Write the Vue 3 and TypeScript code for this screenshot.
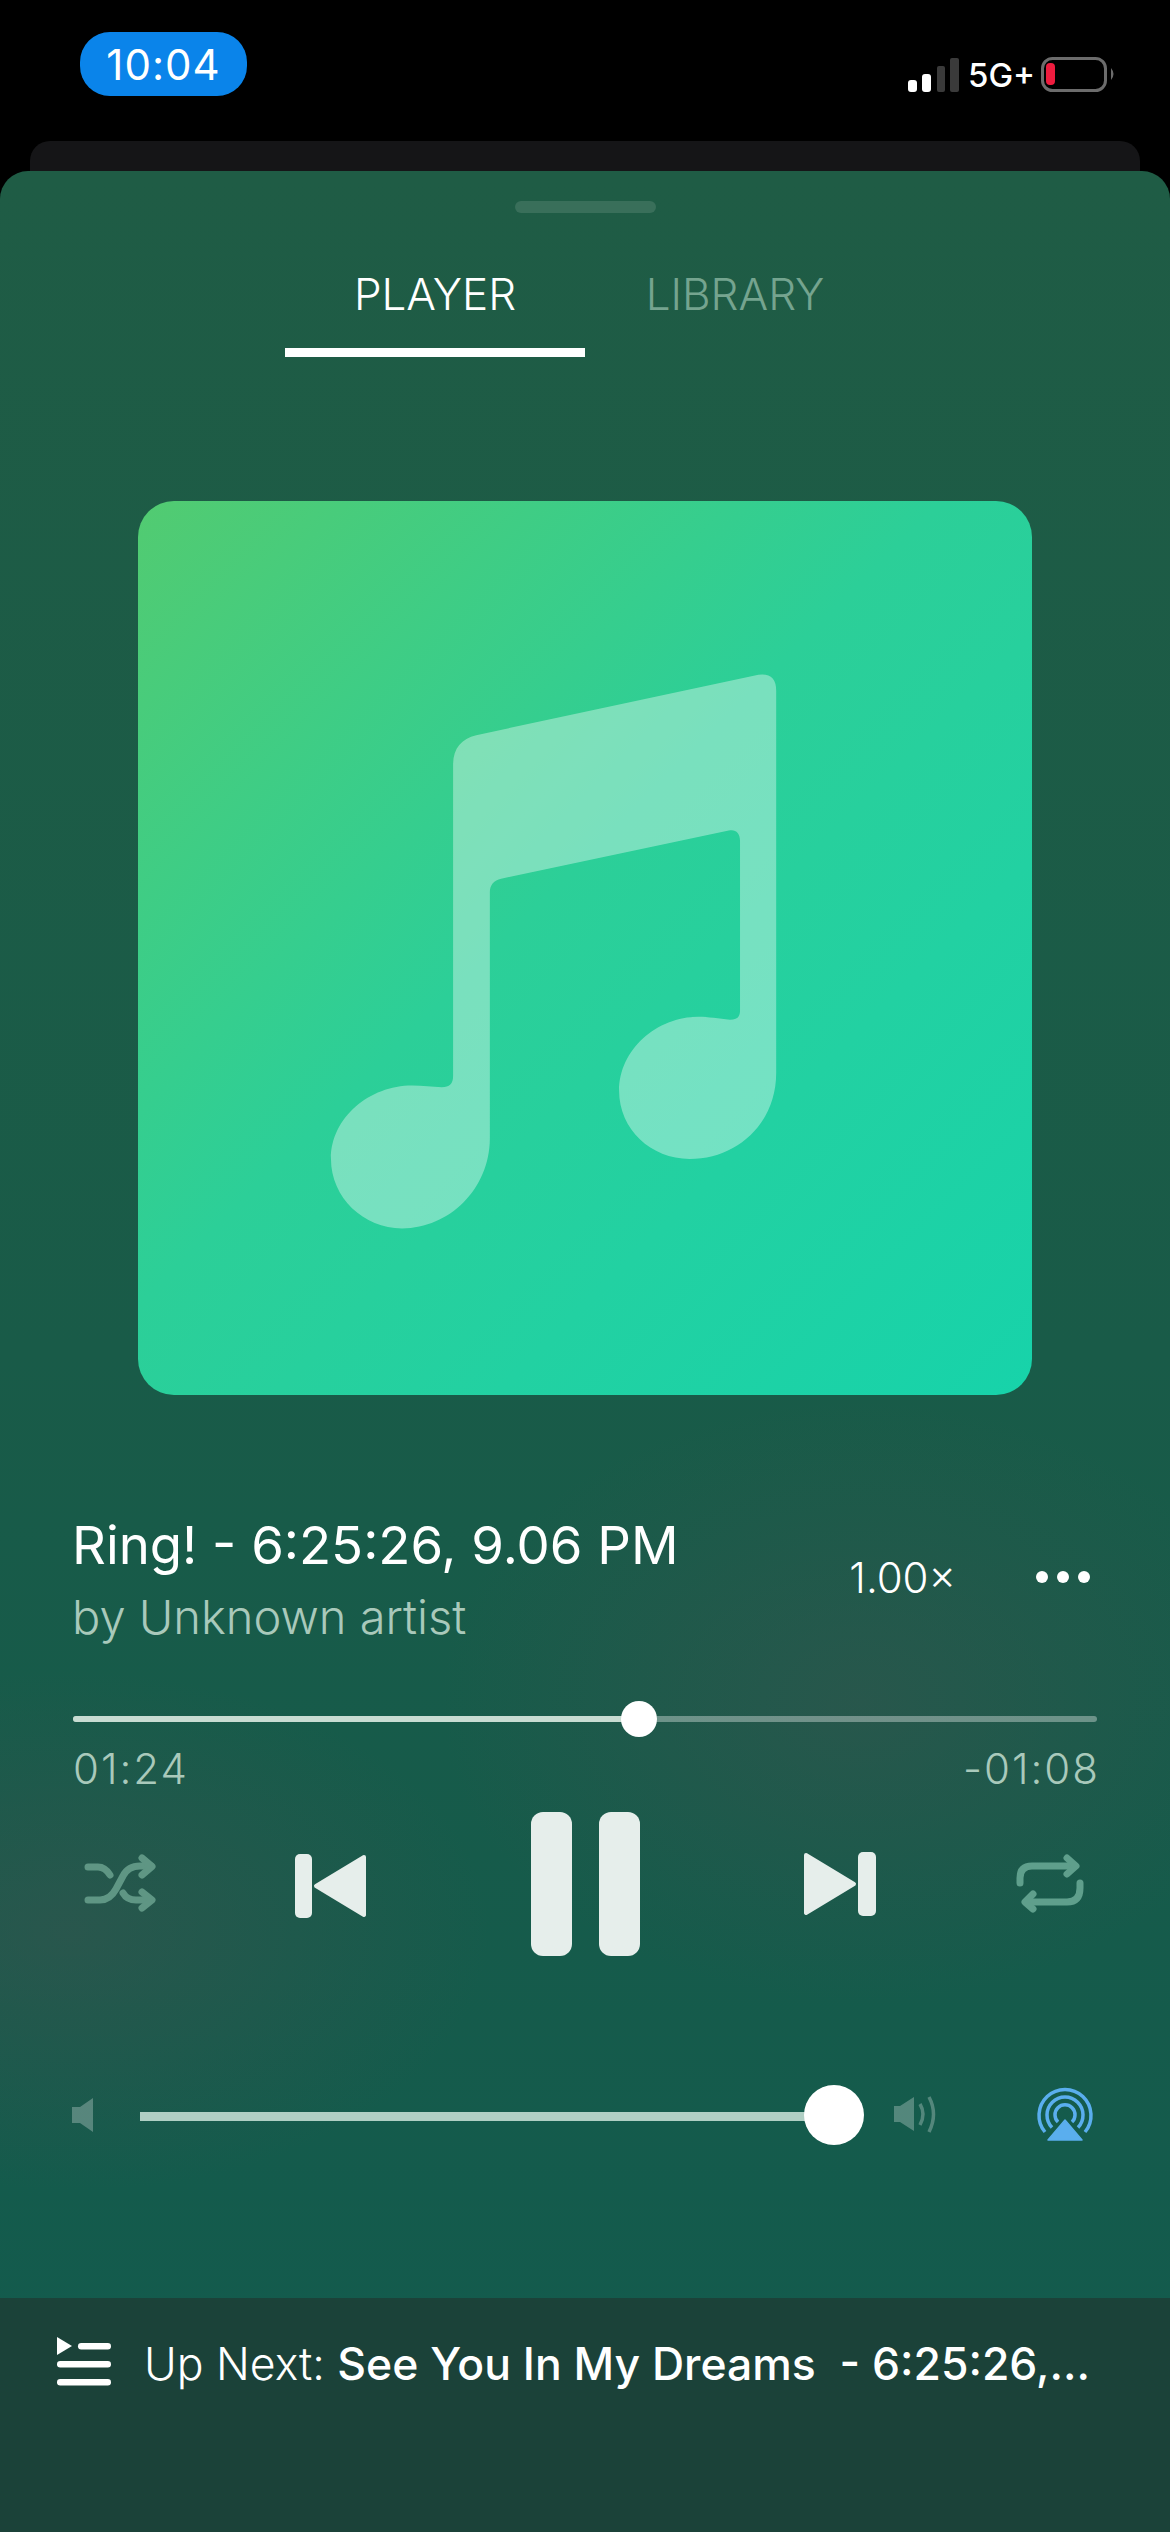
<script setup lang="ts">
const title = 'Ring! - 6:25:26, 9.06 PM'
const progress = 55.3
</script>

<template>
  <div class="screen">
    <header class="status">
      <div class="clock">10:04</div>
      <div class="indicators">
        <svg class="signal" width="52" height="34" viewBox="907 57 52 34">
          <rect x="907" y="79" width="9" height="12" rx="3" fill="#fff" />
          <rect x="921" y="73" width="9" height="18" rx="3" fill="#fff" />
          <rect x="936" y="65" width="8" height="26" rx="2" fill="#3a3a3a" />
          <rect x="949" y="57" width="9" height="34" rx="2" fill="#3a3a3a" />
        </svg>
        <span class="network">5G+</span>
        <svg class="battery" width="75" height="36" viewBox="1041 57 75 36">
          <rect x="1042.5" y="58.5" width="63" height="32" rx="10" fill="none" stroke="#6c6c6c" stroke-width="3" />
          <rect x="1046" y="63" width="9" height="22" rx="4" fill="#ee1c3e" />
          <path d="M1111 68 q5 6 0 12 z" fill="#6c6c6c" />
        </svg>
      </div>
    </header>
    <div class="peek"></div>

    <main class="sheet">
      <div class="handle"></div>
      <nav class="tabs">
        <div class="tab active">PLAYER</div>
        <div class="tab">LIBRARY</div>
      </nav>

      <section class="art">
        <svg class="note" viewBox="30 35 1507 1508" aria-hidden="true">
          <path
            d="M1076 328 Q1106 324 1106 355 L1106 1000 C1106 1085 1040 1145 960 1145 C895 1145 841 1095 841 1030 C841 960 905 905 975 905 C990 905 1010 908 1028 910 C1040 910 1045 905 1045 895 L1045 608 C1045 595 1037 588 1026 591 L642 672 C630 675 623 682 623 695 L623 1110 C623 1195 555 1262 475 1262 C410 1262 355 1210 355 1145 C355 1075 420 1021 492 1021 C510 1021 525 1023 542 1024 C555 1024 561 1018 561 1005 L561 480 C561 452 575 436 600 430 Z"
            fill="#fff"
            fill-opacity="0.37"
          />
        </svg>
      </section>

      <section class="meta">
        <div class="meta-text">
          <div class="title">{{ title }}</div>
          <div class="artist">by Unknown artist</div>
        </div>
        <div class="speed">1.00×</div>
        <div class="more"><i></i><i></i><i></i></div>
      </section>

      <section class="progress">
        <div class="track">
          <div class="fill" :style="{ width: progress + '%' }"></div>
          <div class="knob" :style="{ left: progress + '%' }"></div>
        </div>
        <div class="times"><span>01:24</span><span>-01:08</span></div>
      </section>

      <section class="controls">
        <svg width="72" height="60" viewBox="84 1854 72 60" fill="none" stroke="#5f9684" stroke-width="7" stroke-linecap="round" stroke-linejoin="round">
          <path d="M88 1867 H98 Q105 1867 110 1875" />
          <path d="M88 1900 H100 Q110 1900 116 1889 L123 1876 Q128 1866 140 1866 H151" />
          <path d="M142 1858 L152 1866.5 L142 1875" />
          <path d="M123 1893 Q127 1900 136 1900 H151" />
          <path d="M142 1892 L152 1900 L142 1908" />
        </svg>
        <svg width="72" height="68" viewBox="294 1850 72 68" fill="#e6eeeb">
          <rect x="295" y="1854" width="17" height="64" rx="5" />
          <path d="M364 1857 L316 1886 L364 1915 Z" stroke="#e6eeeb" stroke-width="4" stroke-linejoin="round" />
        </svg>
        <div class="pause"><i></i><i></i></div>
        <svg width="72" height="68" viewBox="804 1850 72 68" fill="#e6eeeb">
          <rect x="858" y="1852" width="18" height="64" rx="5" />
          <path d="M806 1855 L854 1884 L806 1913 Z" stroke="#e6eeeb" stroke-width="4" stroke-linejoin="round" />
        </svg>
        <svg width="72" height="60" viewBox="1014 1854 72 60" fill="none" stroke="#5f9f8c" stroke-width="7" stroke-linecap="round" stroke-linejoin="round">
          <path d="M1020 1883 V1878 Q1020 1866 1032 1866 H1075" />
          <path d="M1067 1858 L1076 1866 L1067 1874" />
          <path d="M1080 1883 V1888 Q1080 1902 1067 1902 H1026" />
          <path d="M1033 1894 L1025 1902 L1033 1909" />
        </svg>
      </section>

      <section class="volume">
        <svg width="21" height="34" viewBox="72 2098 21 34" fill="#fff" fill-opacity="0.27">
          <path d="M72 2107 H80 L93 2098 V2132 L80 2123 H72 Z" />
        </svg>
        <div class="vol-track"><div class="vol-knob"></div></div>
        <svg width="42" height="38" viewBox="894 2097 42 38" fill="none">
          <path d="M894 2107 H900 L914 2098 V2132 L900 2123 H894 Z" fill="#fff" fill-opacity="0.27" />
          <path d="M920 2105 Q926 2115 920 2126" stroke="#fff" stroke-opacity="0.27" stroke-width="3.5" />
          <path d="M929 2098 Q938 2115 929 2133" stroke="#fff" stroke-opacity="0.27" stroke-width="3.5" />
        </svg>
        <svg class="airplay" width="58" height="58" viewBox="1036 2086 58 58" fill="none" stroke="#5aaeee" stroke-width="3.5">
          <path d="M1045 2132 A26 26 0 1 1 1085 2132" />
          <path d="M1052 2127.5 A18 18 0 1 1 1078 2127.5" />
          <path d="M1058 2122 A10 10 0 1 1 1072 2122" />
          <path d="M1065 2120 L1082 2140 H1048 Z" fill="#5aaeee" stroke="#5aaeee" stroke-width="1.5" stroke-linejoin="round" />
        </svg>
      </section>

      <footer class="next">
        <svg width="54" height="50" viewBox="57 2336 54 50" fill="#fff">
          <path d="M57 2337 L72 2346 L57 2355 Z" />
          <rect x="78" y="2343" width="33" height="6.5" rx="3.2" />
          <rect x="57" y="2361" width="54" height="6.5" rx="3.2" />
          <rect x="57" y="2379" width="54" height="6.5" rx="3.2" />
        </svg>
        <div class="next-text">Up Next: <b>See You In My Dreams&nbsp; - 6:25:26,...</b></div>
      </footer>
    </main>
  </div>
</template>

<style>
html, body { margin: 0; background: #000; }
</style>

<style scoped>
.screen {
  width: 1170px;
  height: 2532px;
  background: #000;
  overflow: hidden;
  display: flex;
  flex-direction: column;
  font-family: Inter, "Liberation Sans", sans-serif;
  color: #fff;
}
.status {
  height: 141px;
  box-sizing: border-box;
  display: flex;
  align-items: flex-start;
  padding: 32px 54px 0 80px;
}
.clock {
  width: 167px;
  height: 64px;
  border-radius: 30px;
  background: #0a84ea;
  display: flex;
  align-items: center;
  justify-content: center;
  font-size: 42px;
  letter-spacing: 1px;
  font-weight: 400;
}
.indicators {
  margin-left: auto;
  margin-top: 25px;
  display: flex;
  align-items: center;
  height: 36px;
}
.network {
  margin: 0 11px 0 8px;
  font-size: 33px;
  font-weight: 500;
  width: 62px;
  white-space: nowrap;
}
.peek {
  height: 30px;
  margin: 0 30px;
  background: #151517;
  border-radius: 20px 20px 0 0;
}
.sheet {
  flex: 1;
  display: flex;
  flex-direction: column;
  border-radius: 28px 28px 0 0;
  overflow: hidden;
  background:
    radial-gradient(ellipse 420px 300px at 860px 1530px, rgba(70, 80, 80, 0.36), transparent),
    radial-gradient(ellipse 420px 260px at 70px 1760px, rgba(70, 80, 80, 0.4), transparent),
    linear-gradient(180deg, #1f5c45 0%, #195b48 50%, #125b4e 100%);
}
.handle {
  width: 141px;
  height: 12px;
  margin: 30px auto 0;
  border-radius: 6px;
  background: #396f5a;
}
.tabs {
  display: flex;
  justify-content: center;
  margin-top: 23px;
}
.tab {
  width: 300px;
  height: 121px;
  box-sizing: border-box;
  padding-top: 31px;
  text-align: center;
  font-size: 44px;
  line-height: 54px;
  font-weight: 300;
  color: #75a48f;
}
.tab.active {
  color: #fff;
  border-bottom: 9px solid #fff;
}
.art {
  width: 894px;
  height: 894px;
  margin: 144px auto 0;
  border-radius: 36px;
  background: linear-gradient(135deg, #52cb71 0%, #2ccf98 45%, #22d1a2 70%, #17d3aa 100%);
}
.note {
  display: block;
  width: 100%;
  height: 100%;
}
.meta {
  display: flex;
  align-items: center;
  margin-top: 119px;
  padding: 0 73px 0 72px;
}
.meta-text { flex: 1; }
.title {
  font-size: 52.7px;
  line-height: 62px;
  font-weight: 400;
}
.artist {
  margin-top: 13px;
  font-size: 47px;
  line-height: 56px;
  font-weight: 300;
  color: #a9c9bb;
}
.speed {
  font-size: 42px;
  font-weight: 300;
  white-space: nowrap;
  margin-bottom: 5px;
}
.more {
  display: flex;
  gap: 9px;
  margin: 0 7px 5px 80px;
}
.more i {
  width: 12px;
  height: 12px;
  border-radius: 50%;
  background: #fff;
}
.progress {
  margin-top: 71px;
  padding: 0 73px;
}
.track {
  position: relative;
  height: 6px;
  border-radius: 3px;
  background: rgba(255, 255, 255, 0.35);
}
.fill {
  height: 100%;
  border-radius: 3px;
  background: #c8dcd2;
}
.knob {
  position: absolute;
  top: 50%;
  width: 36px;
  height: 36px;
  border-radius: 50%;
  background: #fff;
  transform: translate(-50%, -50%);
}
.times {
  display: flex;
  justify-content: space-between;
  margin: 22px -3px 0 0;
  font-size: 42px;
  letter-spacing: 2px;
  line-height: 50px;
  font-weight: 300;
  color: #a9c9bb;
}
.controls {
  display: grid;
  grid-template-columns: 240px 180px 330px 180px 240px;
  justify-items: center;
  align-items: center;
  height: 144px;
  margin-top: 18px;
}
.pause {
  display: flex;
  gap: 27px;
}
.pause i {
  width: 41px;
  height: 144px;
  border-radius: 12px;
  background: #e6eeeb;
}
.volume {
  display: flex;
  align-items: center;
  height: 60px;
  margin-top: 129px;
  padding-left: 72px;
}
.vol-track {
  position: relative;
  width: 694px;
  margin: 2px 60px 0 47px;
  height: 9px;
  background: #b0cfc4;
}
.vol-knob {
  position: absolute;
  top: calc(50% - 1px);
  left: 100%;
  width: 60px;
  height: 60px;
  border-radius: 50%;
  background: #fff;
  transform: translate(-50%, -50%);
}
.airplay { margin-left: 100px; }
.next {
  margin-top: auto;
  height: 234px;
  box-sizing: border-box;
  display: flex;
  align-items: flex-start;
  padding: 38px 0 0 57px;
  background: #1b4239;
}
.next svg { flex: none; }
.next-text {
  margin: 2px 0 0 33px;
  font-size: 44.5px;
  line-height: 52px;
  font-weight: 300;
  white-space: nowrap;
}
.next-text b { font-weight: 500; }
</style>
